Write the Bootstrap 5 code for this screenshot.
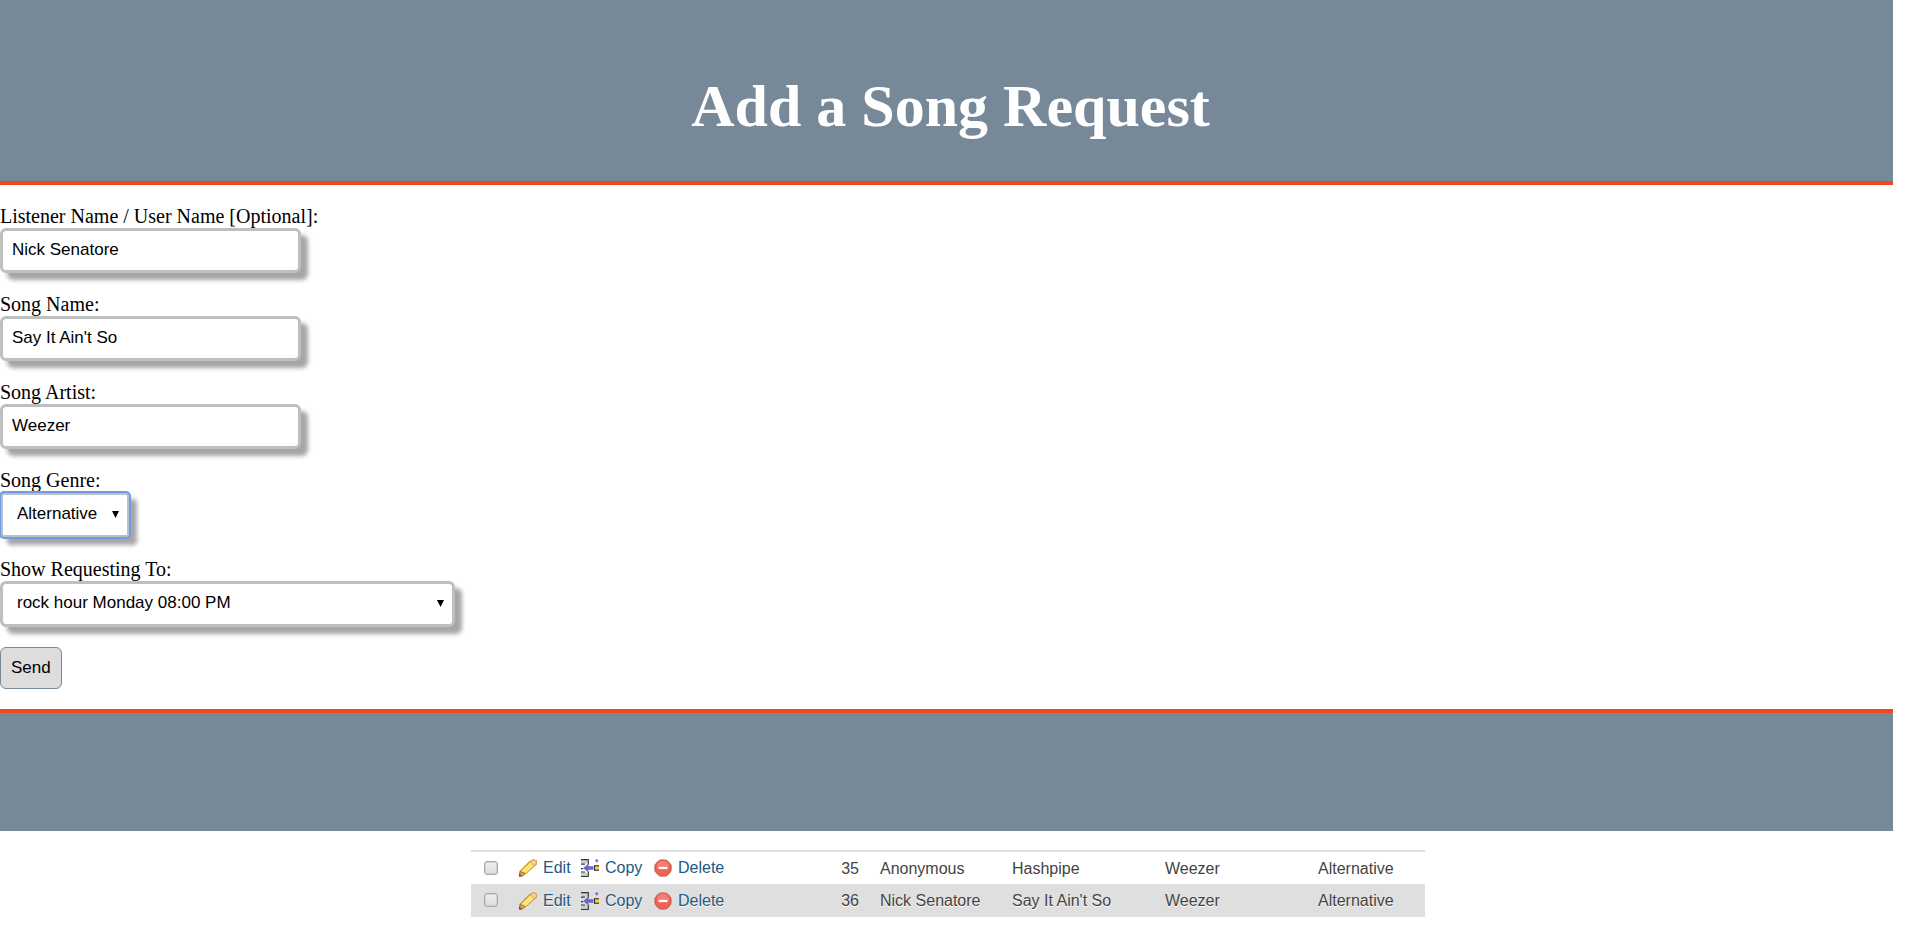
<!DOCTYPE html>
<html lang="en">
<head>
<meta charset="utf-8">
<meta name="viewport" content="width=device-width, initial-scale=1">
<title>Add a Song Request</title>
<link href="https://cdn.jsdelivr.net/npm/bootstrap@5.3.0/dist/css/bootstrap.min.css" rel="stylesheet">
<style>
  body { font-family: "Liberation Serif", "Times New Roman", serif; font-size: 20px; line-height: 23px; color: #000; background: #fff; }
  .page { margin-right: 27px; }
  .band { background: #778899; }
  .band-top { border-bottom: 4px solid #eb4a1c; padding: 72px 0 40px 8px; }
  .band-top h1 { font-size: 60px; line-height: 69px; font-weight: 700; }
  .band-bottom { border-top: 4px solid #eb4a1c; height: 122px; }
  .request-form { padding: 20px 0; gap: 20px; }
  .field, .pick, .send, .results { font-family: "Liberation Sans", Arial, sans-serif; font-size: 16px; line-height: 18px; color: #000; }
  .field, .pick, .send { font-size: 17px; }
  .field, .pick { background-color: #fff; border: 3px solid #bfbfbf; border-radius: 6px; box-shadow: 7px 7px 4px #a6a6a6; max-width: 100%; }
  .field { width: 301px; height: 45px; padding: 9px 9px 11px; }
  .pick { height: 46px; padding: 10px 14px 12px; appearance: none; background-repeat: no-repeat; background-position: right 7px center;
    background-image: url("data:image/svg+xml,%3Csvg xmlns='http://www.w3.org/2000/svg' width='8' height='8'%3E%3Cpath d='M0 0h7L3.500 7z'/%3E%3C/svg%3E"); }
  .pick-genre { width: 130px; border-radius: 4px; outline: 2px solid #6b9cec; outline-offset: -1px; }
  .pick-show { width: 455px; }
  .field:focus, .pick:focus { outline: 2px solid #6b9cec; }
  .send { height: 42px; padding: 0 10px; background: #ddd; border: 1px solid #778899; border-radius: 6px; }
  .results-area { padding: 19px 0 0 3px; }
  .results { width: 954px; max-width: 100%; border-top: 2px solid #dfdfdf; color: #444; table-layout: fixed; text-shadow: 0 1px 0 #fff; }
  .results td { height: 33px; padding: 1px 0 0; vertical-align: middle; white-space: nowrap; }
  .results tr:nth-child(even) { background: #dfdfdf; }
  .results a { color: #235a81; gap: 6px; line-height: 16px; padding-bottom: 1px; }
  .results svg { width: 18px; height: 18px; flex: none; }
  .tick { appearance: none; display: block; width: 14px; height: 14px; margin: 0 0 2px 13px; border: 1px solid #a9a9a9; border-radius: 3px; background: linear-gradient(#eee, #dcdcdc); box-shadow: inset 0 0 0 1px #d2d2d2; }
  .tick:checked { background: #235a81; }
</style>
</head>
<body>
<svg class="d-none" aria-hidden="true">
  <symbol id="pencil" viewBox="0 0 16 16">
    <path d="M.5 15 1 11 9.500 2.500l3-1.800 2.700.8.300 3L6.500 12.500z" fill="#f7d848" stroke="#d0913a"/>
    <path d="M3.500 11 11 3.500M5.500 12l7-7" stroke="#fff08c" stroke-width="1.300"/>
    <path d="M10.300 2.300 12.500.7l2.700.8.300 3L13 6z" fill="#f6cfa4" stroke="#d99a5a" stroke-width=".7"/>
    <path d="m1 11 4.500 2-2 2H.5z" fill="#dba16c" stroke="#a8682a" stroke-width=".8"/>
    <path d="M.2 13.200 2.600 15.500H.2z" fill="#5b3a1d"/>
  </symbol>
  <symbol id="copy" viewBox="0 0 16 16">
    <path d="M0 1h6v3H0zM0 12h6v3H0z" fill="#ccc"/>
    <path d="M0 .5h6.500V5M0 4.500h3.500M0 8.500h2M0 11.500h3.500M6.500 11v4.500H0" fill="none" stroke="#333"/>
    <path d="M2 8l4.500-4v2.500H11v3H6.500V12z" fill="#6666cc"/>
    <path d="M11.500 5.500H16v5h-4.500z" fill="#333"/><path d="M12.500 6.500H16v3h-3.500z" fill="#fc3"/>
    <path d="M14 0v3M12.500 1.500h3" stroke="#6666cc"/>
  </symbol>
  <symbol id="delete" viewBox="0 0 16 16">
    <path d="M5 .2h6L15.800 5v6L11 15.800H5L.2 11V5z" fill="#e8a49a"/>
    <circle cx="8" cy="8" r="7.100" fill="#ef6257" stroke="#d35a50"/>
    <path d="M2.500 7a5.500 5.500 0 0 1 11 0z" fill="#f48b7e" opacity=".7"/>
    <path d="M4 7h8v2H4z" fill="#fff"/>
  </symbol>
</svg>
<div class="page">
  <header class="band band-top text-center text-white"><h1 class="m-0">Add a Song Request</h1></header>
  <main>
    <form class="request-form d-flex flex-column">
      <div class="d-flex flex-column align-items-start"><label for="listener">Listener Name / User Name [Optional]:</label><input class="field" type="text" id="listener" value="Nick Senatore"></div>
      <div class="d-flex flex-column align-items-start"><label for="song">Song Name:</label><input class="field" type="text" id="song" value="Say It Ain't So"></div>
      <div class="d-flex flex-column align-items-start"><label for="artist">Song Artist:</label><input class="field" type="text" id="artist" value="Weezer"></div>
      <div class="d-flex flex-column align-items-start"><label for="genre">Song Genre:</label><select class="pick pick-genre" id="genre"><option>Alternative</option></select></div>
      <div class="d-flex flex-column align-items-start"><label for="show">Show Requesting To:</label><select class="pick pick-show" id="show"><option>rock hour Monday 08:00 PM</option></select></div>
      <button class="send align-self-start" type="button">Send</button>
    </form>
  </main>
  <div class="band band-bottom"></div>
  <div class="results-area d-flex justify-content-center">
  <table class="results">
    <colgroup><col style="width:48px"><col style="width:62px"><col style="width:73px"><col style="width:90px"><col style="width:115px"><col style="width:21px"><col style="width:132px"><col style="width:153px"><col style="width:153px"><col></colgroup>
    <tbody>
      <tr>
        <td><input class="tick" type="checkbox" aria-label="Select row 35"></td>
        <td><a href="#" class="d-flex align-items-center text-decoration-none"><svg aria-hidden="true"><use href="#pencil"/></svg>Edit</a></td>
        <td><a href="#" class="d-flex align-items-center text-decoration-none"><svg aria-hidden="true"><use href="#copy"/></svg>Copy</a></td>
        <td><a href="#" class="d-flex align-items-center text-decoration-none"><svg aria-hidden="true"><use href="#delete"/></svg>Delete</a></td>
        <td class="text-end">35</td><td></td><td>Anonymous</td><td>Hashpipe</td><td>Weezer</td><td>Alternative</td>
      </tr>
      <tr>
        <td><input class="tick" type="checkbox" aria-label="Select row 36"></td>
        <td><a href="#" class="d-flex align-items-center text-decoration-none"><svg aria-hidden="true"><use href="#pencil"/></svg>Edit</a></td>
        <td><a href="#" class="d-flex align-items-center text-decoration-none"><svg aria-hidden="true"><use href="#copy"/></svg>Copy</a></td>
        <td><a href="#" class="d-flex align-items-center text-decoration-none"><svg aria-hidden="true"><use href="#delete"/></svg>Delete</a></td>
        <td class="text-end">36</td><td></td><td>Nick Senatore</td><td>Say It Ain't So</td><td>Weezer</td><td>Alternative</td>
      </tr>
    </tbody>
  </table>
  </div>
</div>
<script src="https://cdn.jsdelivr.net/npm/bootstrap@5.3.0/dist/js/bootstrap.bundle.min.js"></script>
</body>
</html>
